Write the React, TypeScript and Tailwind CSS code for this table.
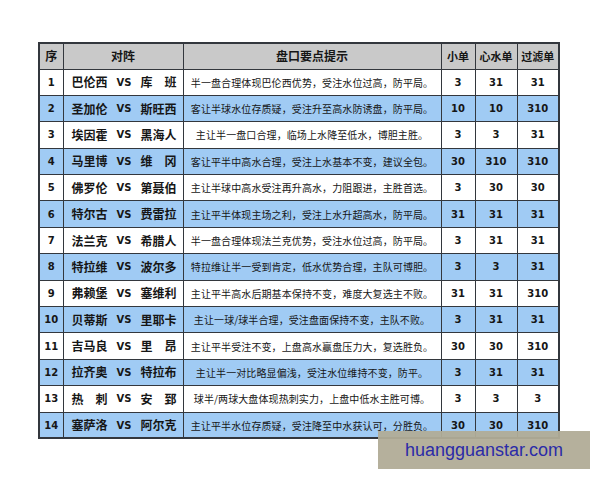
import React from "react";

type Row = [string, string, string, string, string, string, string];

const rows: Row[] = [
  ["1", "巴伦西", "库班", "半一盘合理体现巴伦西优势，受注水位过高，防平局。", "3", "31", "31"],
  ["2", "圣加伦", "斯旺西", "客让半球水位存质疑，受注升至高水防诱盘，防平局。", "10", "10", "310"],
  ["3", "埃因霍", "黑海人", "主让半一盘口合理，临场上水降至低水，博胆主胜。", "3", "3", "31"],
  ["4", "马里博", "维冈", "客让平半中高水合理，受注上水基本不变，建议全包。", "30", "310", "310"],
  ["5", "佛罗伦", "第聂伯", "主让半球中高水受注再升高水，力阻跟进，主胜首选。", "3", "30", "30"],
  ["6", "特尔古", "费雷拉", "主让平半体现主场之利，受注上水升超高水，防平局。", "31", "31", "31"],
  ["7", "法兰克", "希腊人", "半一盘合理体现法兰克优势，受注水位过高，防平局。", "3", "31", "31"],
  ["8", "特拉维", "波尔多", "特拉维让半一受到肯定，低水优势合理，主队可博胆。", "3", "3", "31"],
  ["9", "弗赖堡", "塞维利", "主让平半高水后期基本保持不变，难度大复选主不败。", "31", "31", "310"],
  ["10", "贝蒂斯", "里耶卡", "主让一球/球半合理，受注盘面保持不变，主队不败。", "3", "31", "31"],
  ["11", "吉马良", "里昂", "主让平半受注不变，上盘高水赢盘压力大，复选胜负。", "30", "30", "310"],
  ["12", "拉齐奥", "特拉布", "主让半一对比略显偏浅，受注水位维持不变，防平。", "3", "31", "31"],
  ["13", "热刺", "安郅", "球半/两球大盘体现热刺实力，上盘中低水主胜可博。", "3", "3", "3"],
  ["14", "塞萨洛", "阿尔克", "主让平半水位存质疑，受注降至中水获认可，分胜负。", "30", "30", "310"],
];

const cjk = "font-['Noto_Sans_CJK_SC',sans-serif]";
const num = "font-['DejaVu_Sans',sans-serif]";

function Name({ text }: { text: string }) {
  const chars = Array.from(text);
  return (
    <span className="flex w-[36px] justify-between">
      {chars.map((c, i) => (
        <span key={i}>{c}</span>
      ))}
    </span>
  );
}

export default function App() {
  const cell = "border border-[#33373d] p-0 text-center";
  return (
    <div className="relative w-[600px] h-[480px] bg-white overflow-hidden">
      <div className="pt-[42px] pl-[38px]">
        <table className="border-collapse border-2 border-[#33373d] text-[#161616] table-fixed w-[520px]">
          <colgroup>
            <col className="w-[24px]" />
            <col className="w-[120px]" />
            <col className="w-[258px]" />
            <col className="w-[34px]" />
            <col className="w-[42px]" />
            <col className="w-[42px]" />
          </colgroup>
          <thead>
            <tr className="h-[26px] bg-[#c9c9c9]">
              <th className={`${cell} ${cjk} text-[12px] font-bold`}>序</th>
              <th className={`${cell} ${cjk} text-[12px] font-bold`}>对阵</th>
              <th className={`${cell} ${cjk} text-[12px] font-bold`}>盘口要点提示</th>
              <th className={`${cell} ${cjk} text-[11px] font-bold`}>小单</th>
              <th className={`${cell} ${cjk} text-[11px] font-bold`}>心水单</th>
              <th className={`${cell} ${cjk} text-[11px] font-bold`}>过滤单</th>
            </tr>
          </thead>
          <tbody>
            {rows.map((r, i) => (
              <tr key={r[0]} className={`h-[26.4px] ${i % 2 === 1 ? "bg-[#a0cbf4]" : "bg-white"}`}>
                <td className={`${cell} ${num} text-[10px] font-bold`}>{r[0]}</td>
                <td className={`${cell} ${cjk} text-[12px] font-bold`}>
                  <div className="flex items-center justify-center gap-[9px] pl-[2px]">
                    <Name text={r[1]} />
                    <span className={`${num} text-[10px] font-bold`}>VS</span>
                    <Name text={r[2]} />
                  </div>
                </td>
                <td className={`${cell} ${cjk} text-[10px] tracking-[0.1px]`}>{r[3]}</td>
                <td className={`${cell} ${num} text-[10px] font-bold`}>{r[4]}</td>
                <td className={`${cell} ${num} text-[10px] font-bold`}>{r[5]}</td>
                <td className={`${cell} ${num} text-[10px] font-bold`}>{r[6]}</td>
              </tr>
            ))}
          </tbody>
        </table>
      </div>
      <div className="absolute left-[378px] top-[431px] w-[212px] h-[38px] bg-[#b1ac97]/95 flex items-center justify-center">
        <span className="font-['Liberation_Sans',sans-serif] text-[18px] text-[#2b2ba8]">huangguanstar.com</span>
      </div>
    </div>
  );
}
